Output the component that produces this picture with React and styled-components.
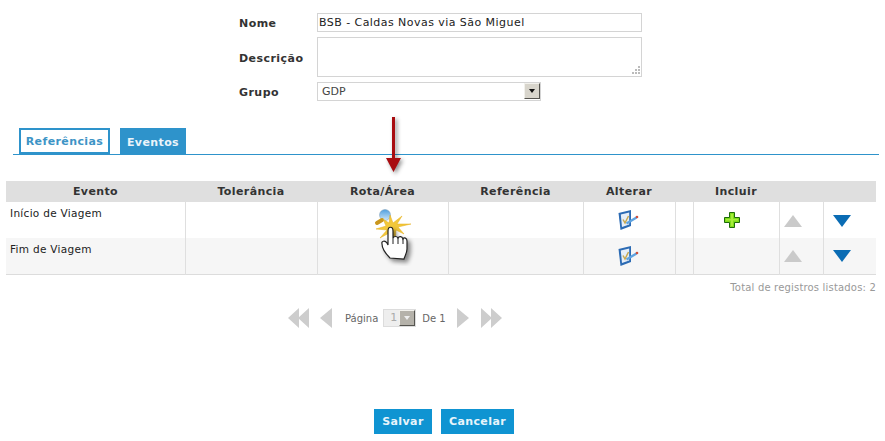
import React from "react";
import styled, { createGlobalStyle } from "styled-components";

const GlobalStyle = createGlobalStyle`
  html, body {
    margin: 0;
    padding: 0;
    background: #fff;
  }
  body {
    font-family: "DejaVu Sans", Verdana, sans-serif;
    font-size: 11px;
    color: #333;
  }
`;

const Page = styled.div`
  position: relative;
  width: 885px;
  height: 441px;
  overflow: hidden;
`;

const Form = styled.div`
  display: grid;
  grid-template-columns: 78px 325px;
  grid-template-rows: 19px 40px 19px;
  row-gap: 5px;
  padding: 13px 0 0 239px;
  align-items: center;
`;

const Label = styled.label`
  padding-top: 2px;
  font-weight: bold;
  font-size: 11px;
  letter-spacing: 0.45px;
  color: #333;
`;

const TextField = styled.div`
  box-sizing: border-box;
  height: 19px;
  border: 1px solid #d4d4d4;
  padding: 1px 0 0 1px;
  font-size: 11px;
  letter-spacing: 0.45px;
  line-height: 16px;
  color: #222;
`;

const TextArea = styled.div`
  position: relative;
  box-sizing: border-box;
  height: 40px;
  border: 1px solid #d4d4d4;
`;

const Grip = styled.svg`
  position: absolute;
  right: 0;
  bottom: 0;
`;

const SelectBox = styled.div`
  box-sizing: border-box;
  width: 224px;
  height: 19px;
  border: 1px solid #d4d4d4;
  padding-left: 4px;
  display: flex;
  align-items: flex-start;
  justify-content: space-between;
  font-size: 11px;
  line-height: 17px;
  color: #444;
`;

const SelectArrow = styled.span`
  box-sizing: border-box;
  width: 16px;
  height: 16px;
  background: ${(p) => p.$bg || "#d8d5cc"};
  border: 1px solid;
  border-color: #f2f1ec #55544f #55544f #f2f1ec;
  display: flex;
  align-items: center;
  justify-content: center;
  &::after {
    content: "";
    border-left: 3.5px solid transparent;
    border-right: 3.5px solid transparent;
    border-top: 4px solid ${(p) => p.$color || "#111"};
  }
`;

const Tabs = styled.div`
  display: flex;
  gap: 10px;
  height: 26px;
  margin: 27px 6px 0 13px;
  padding-left: 6px;
  border-bottom: 1px solid #2e93cb;
`;

const Tab = styled.div`
  box-sizing: border-box;
  width: ${(p) => p.$width}px;
  height: 26px;
  display: flex;
  align-items: center;
  justify-content: center;
  font-weight: bold;
  font-size: 11px;
  letter-spacing: 0.4px;
  border: 2px solid #2e93cb;
  border-bottom-width: ${(p) => (p.$active ? 0 : 2)}px;
  background: ${(p) => (p.$active ? "#2e93cb" : "#fff")};
  color: ${(p) => (p.$active ? "#eaf4fa" : "#3d94c6")};
`;

const Table = styled.table`
  table-layout: fixed;
  width: 870px;
  margin: 26px 0 0 6px;
  border-collapse: collapse;
  border-bottom: 1px solid #dcdcdc;
`;

const HeadCell = styled.th`
  height: 21px;
  padding: 0;
  background: #dfdfdf;
  font-size: 11px;
  font-weight: bold;
  letter-spacing: 0.4px;
  text-align: center;
  color: #333;
`;

const Row = styled.tr`
  height: 36px;
  background: ${(p) => (p.$alt ? "#f6f6f6" : "#fff")};
`;

const Cell = styled.td`
  padding: 0 ${(p) => p.$shift || 0}px 0 0;
  vertical-align: middle;
  text-align: center;
  border-left: 1px solid #dfdfdf;
  svg {
    display: inline-block;
    vertical-align: middle;
  }
`;

const NameCell = styled.td`
  vertical-align: top;
  text-align: left;
  padding: 5px 0 0 4px;
  font-size: 10.5px;
  letter-spacing: 0.3px;
  line-height: 13px;
  color: #222;
`;

const Total = styled.div`
  width: 870px;
  margin: 7px 0 0 6px;
  text-align: right;
  font-size: 10px;
  letter-spacing: 0.18px;
  line-height: 12px;
  color: #999;
`;

const Pager = styled.div`
  display: flex;
  align-items: center;
  height: 20px;
  margin: 14px 0 0 288px;
  color: #666;
  font-size: 10px;
`;

const PagerArrow = styled.svg`
  display: block;
  margin-right: ${(p) => p.$after || 0}px;
`;

const PageLabel = styled.span`
  padding-top: 1px;
  margin-right: ${(p) => p.$after}px;
`;

const PageSelect = styled.div`
  box-sizing: border-box;
  width: 33px;
  height: 18px;
  margin-right: 6px;
  border: 1px solid #dcdcdc;
  background: #eee;
  padding-left: 6px;
  display: flex;
  align-items: center;
  justify-content: space-between;
  font-size: 11px;
  color: #aaa;
`;

const Actions = styled.div`
  display: flex;
  gap: 9px;
  margin: 81px 0 0 374px;
`;

const Button = styled.button`
  height: 25px;
  padding: 0;
  width: ${(p) => p.$width}px;
  border: 0;
  background: #0f94d2;
  color: #e8f4fb;
  font-family: inherit;
  font-weight: bold;
  font-size: 11px;
  letter-spacing: 0.4px;
`;

const DownArrow = styled.svg`
  position: absolute;
  left: 384px;
  top: 114px;
  filter: drop-shadow(2px 2px 2px rgba(0, 0, 0, 0.45));
`;

const HandOverlay = styled.svg`
  position: absolute;
  left: 370px;
  top: 208px;
`;

const HandShape = styled.path`
  filter: drop-shadow(3px 3px 2px rgba(0, 0, 0, 0.45));
`;

const Triangle = ({ up, color }) => (
  <svg width="18" height="12" viewBox="0 0 18 12">
    <path d={up ? "M9 0 L18 12 L0 12 Z" : "M0 0 L18 0 L9 12 Z"} fill={color} />
  </svg>
);

const EditIcon = () => (
  <svg width="21" height="20" viewBox="0 0 21 20">
    <path d="M0.5 3 L13 0 L13 16 L2.5 20 Z" fill="#2c6bb4" />
    <path d="M2.8 4.6 L11.2 2.6 L11.2 14.6 L4 17 Z" fill="#e6eef8" />
    <path d="M5 9.5 L7 13 L10.5 6" fill="none" stroke="#c8a850" strokeWidth="1.5" />
    <path d="M8.5 13.5 L18.5 7.5" stroke="#5fa3e0" strokeWidth="2.4" />
    <circle cx="19" cy="7" r="1.3" fill="#d0503c" />
  </svg>
);

const PlusIcon = () => (
  <svg width="16" height="16" viewBox="0 0 16 16">
    <path
      d="M5.5 .5 H10.5 V5.5 H15.5 V10.5 H10.5 V15.5 H5.5 V10.5 H.5 V5.5 H5.5 Z"
      fill="#7edb1c"
      stroke="#1d6b08"
    />
    <path d="M7 2 H9 V7 H14 V8.5 H9 V14 H7 V8.5 H2 V7 H7 Z" fill="#a6ee3a" />
  </svg>
);

const rows = [
  { name: "Início de Viagem", plus: true },
  { name: "Fim de Viagem", alt: true },
];

const columns = [
  ["Evento", 179],
  ["Tolerância", 132],
  ["Rota/Área", 131],
  ["Referência", 135],
  ["Alterar", 92],
  ["", 18],
  ["Incluir", 86],
  ["", 44],
  ["", 53],
];

const handPath =
  "M20 50 C15 45 12 39 12 36 C11 33 15 32 17 35 L18 37 L18 23 C18 18 23 18 23 23 L23 30 C24 28 27 28 28 30 C29 28 32 28 33 31 C34 29 37 30 37 33 L37 41 C37 45 35 48 34 51 Z";

export default function App() {
  return (
    <Page>
      <GlobalStyle />
      <Form>
        <Label>Nome</Label>
        <TextField>BSB - Caldas Novas via São Miguel</TextField>
        <Label>Descrição</Label>
        <TextArea>
          <Grip width="12" height="12" viewBox="0 0 12 12">
            <g fill="#bbb">
              <rect x="9" y="2" width="2" height="2" />
              <rect x="6" y="5" width="2" height="2" />
              <rect x="9" y="5" width="2" height="2" />
              <rect x="3" y="8" width="2" height="2" />
              <rect x="6" y="8" width="2" height="2" />
              <rect x="9" y="8" width="2" height="2" />
            </g>
          </Grip>
        </TextArea>
        <Label>Grupo</Label>
        <SelectBox>
          GDP
          <SelectArrow />
        </SelectBox>
      </Form>

      <Tabs>
        <Tab $width={91}>Referências</Tab>
        <Tab $width={66} $active>
          Eventos
        </Tab>
      </Tabs>

      <Table>
        <colgroup>
          {columns.map(([, w], i) => (
            <col key={i} style={{ width: w }} />
          ))}
        </colgroup>
        <thead>
          <tr>
            {columns.map(([title], i) => (
              <HeadCell key={i}>{title}</HeadCell>
            ))}
          </tr>
        </thead>
        <tbody>
          {rows.map((row) => (
            <Row key={row.name} $alt={row.alt}>
              <NameCell>{row.name}</NameCell>
              <Cell />
              <Cell />
              <Cell />
              <Cell $shift={2}>
                <EditIcon />
              </Cell>
              <Cell />
              <Cell $shift={8}>{row.plus && <PlusIcon />}</Cell>
              <Cell $shift={16}>
                <Triangle up color="#cacaca" />
              </Cell>
              <Cell $shift={16}>
                <Triangle color="#0a6cb4" />
              </Cell>
            </Row>
          ))}
        </tbody>
      </Table>

      <Total>Total de registros listados: 2</Total>

      <Pager>
        <PagerArrow $after={11} width="21" height="20" viewBox="0 0 21 20">
          <path d="M0 10 L11 0 V20 Z M10 10 L21 0 V20 Z" fill="#cdcdcd" />
        </PagerArrow>
        <PagerArrow $after={13} width="12" height="20" viewBox="0 0 12 20">
          <path d="M0 10 L12 0 V20 Z" fill="#cdcdcd" />
        </PagerArrow>
        <PageLabel $after={5}>Página</PageLabel>
        <PageSelect>
          1
          <SelectArrow $bg="#b5b2aa" $color="#eee" />
        </PageSelect>
        <PageLabel $after={11}>De 1</PageLabel>
        <PagerArrow $after={12} width="12" height="20" viewBox="0 0 12 20">
          <path d="M12 10 L0 0 V20 Z" fill="#cdcdcd" />
        </PagerArrow>
        <PagerArrow width="21" height="20" viewBox="0 0 21 20">
          <path d="M11 10 L0 0 V20 Z M21 10 L10 0 V20 Z" fill="#cdcdcd" />
        </PagerArrow>
      </Pager>

      <Actions>
        <Button $width={58}>Salvar</Button>
        <Button $width={73}>Cancelar</Button>
      </Actions>

      <DownArrow width="24" height="62" viewBox="0 0 24 62">
        <path d="M8 3 H11 V44 H17 L9.5 58 L2 44 H8 Z" fill="#a80c10" />
      </DownArrow>

      <HandOverlay width="50" height="58" viewBox="0 0 50 58">
        <defs>
          <linearGradient id="glass" x1="0" y1="0" x2="0" y2="1">
            <stop offset="0" stopColor="#4f9fe0" />
            <stop offset="1" stopColor="#cfe6f7" />
          </linearGradient>
        </defs>
        <circle cx="15" cy="7" r="5.5" fill="url(#glass)" stroke="#7f9db5" strokeWidth=".5" />
        <path d="M12 12 L7 15" stroke="#c9961e" strokeWidth="4" strokeLinecap="round" />
        <path
          d="M20 7 L23 15 L32 8 L27 16 L41 16 L28 19 L34 26 L26 22 L25 33 L21 24 L10 30 L17 22 L6 21 L16 18 L13 11 L19 15 Z"
          fill="#f2c83a"
          stroke="#e4ae1c"
          strokeWidth=".5"
        />
        <HandShape d={handPath} fill="#fff" stroke="#222" strokeWidth="1.2" />
        <path d="M23 30 V36 M28 30 V36 M33 31 V36" stroke="#222" strokeWidth="1" />
      </HandOverlay>
    </Page>
  );
}
